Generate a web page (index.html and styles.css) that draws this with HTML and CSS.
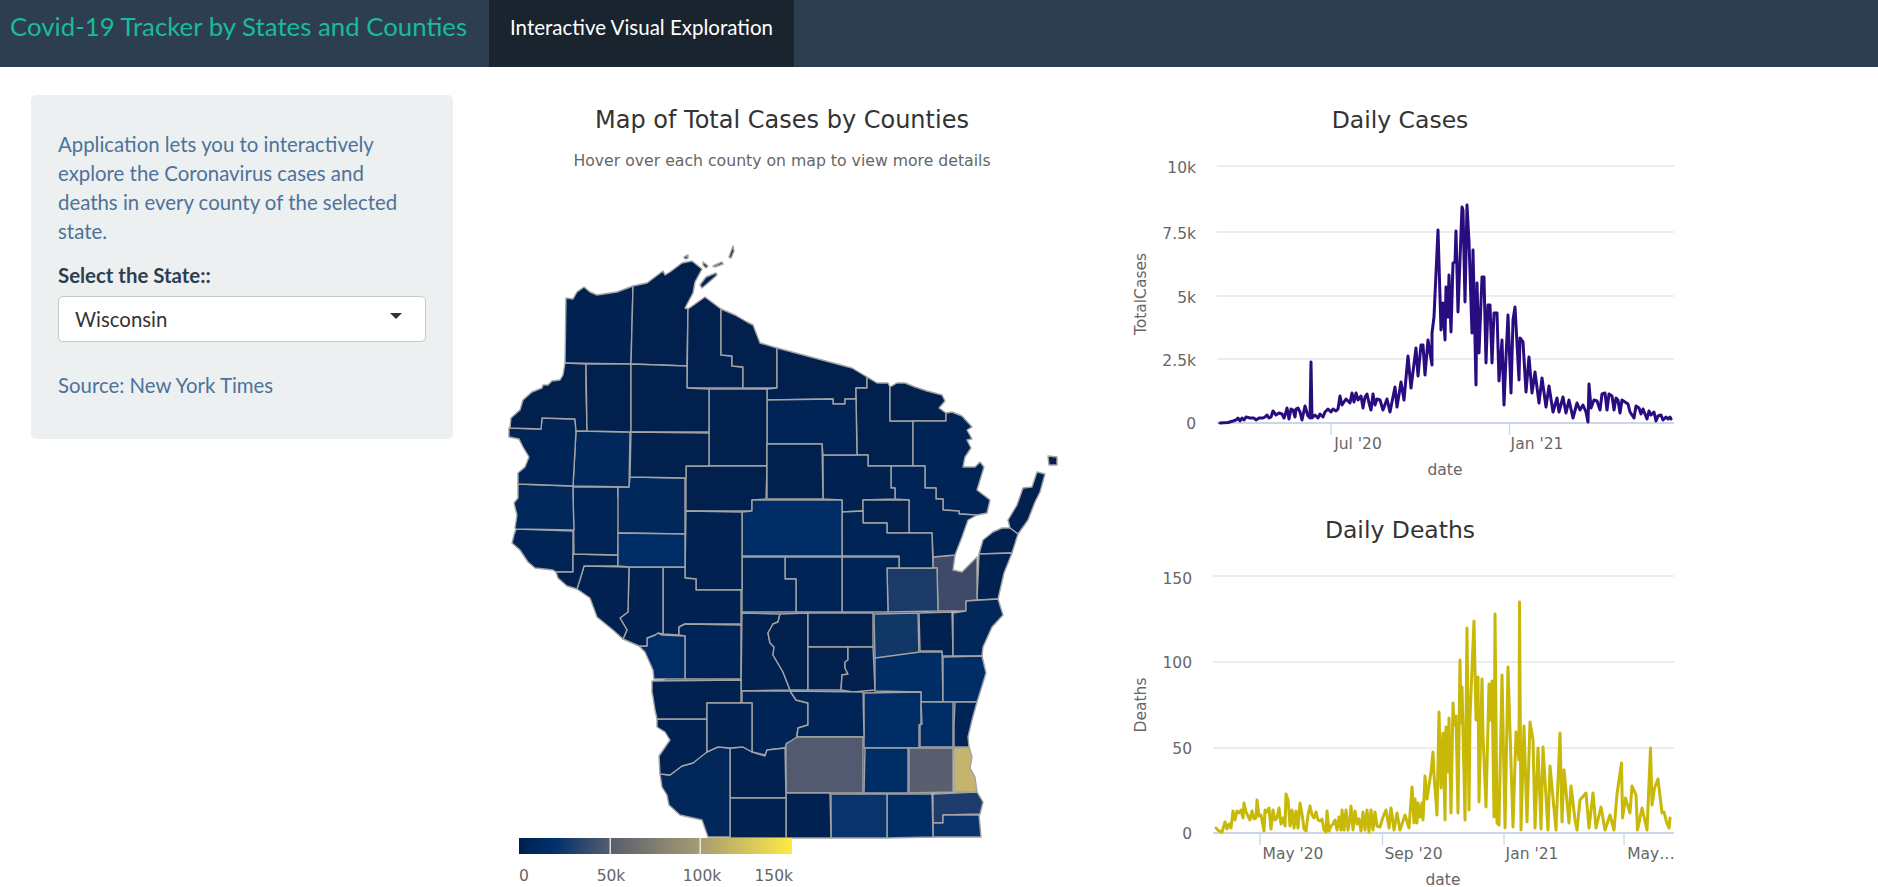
FILE: index.html
```html
<!DOCTYPE html>
<html lang="en">
<head>
  <meta charset="UTF-8" />
  <meta name="viewport" content="width=device-width, initial-scale=1.0"/>
  <title>Covid-19 Tracker by States and Counties</title>
  <link rel="stylesheet" href="styles.css">
</head>
<body>
  <nav class="navbar">
    <a class="brand">Covid-19 Tracker by States and Counties</a>
    <a class="tab">Interactive Visual Exploration</a>
  </nav>

  <div class="page">
    <aside class="well">
      <p class="intro">Application lets you to interactively explore the Coronavirus cases and deaths in every county of the selected state.</p>
      <label class="select-label">Select the State::</label>
      <div class="select"><span>Wisconsin</span><i class="caret"></i></div>
      <p class="source">Source: New York Times</p>
    </aside>

    <section class="map-col">
      <h2 class="map-title">Map of Total Cases by Counties</h2>
      <p class="map-sub">Hover over each county on map to view more details</p>
      <!-- viewBox uses page coordinates -->
      <svg class="map" viewBox="472 240 620 647" width="620" height="647">
        <defs>
          <linearGradient id="scale">
            <stop offset="0" stop-color="#00204e"/>
            <stop offset="0.13" stop-color="#00306f"/>
            <stop offset="0.33" stop-color="#575c6e"/>
            <stop offset="0.66" stop-color="#a59c74"/>
            <stop offset="1" stop-color="#ffe945"/>
          </linearGradient>
        </defs>
        <g class="counties">
          <polygon class="underlay" points="575,370 860,400 900,470 930,520 950,600 960,700 950,780 880,830 740,830 700,790 670,720 665,680 630,625 585,570 530,510 530,440"/>
          <polygon class="c1" points="566,298 573,299 577,292 584,287 590,292 597,295 617,292 633,286 631,364 565,363"/>
          <polygon class="c0" points="633,286 647,283 655,277 663,271 665,275 670,272 682,263 692,261 702,269 695,282 693,293 685,308 688,309 687,366 631,364"/>
          <polygon class="c0" points="688,309 705,297 721,309 721,355 732,356 732,366 743,367 743,388 687,388"/>
          <polygon class="c0" points="721,309 735,315 747,322 753,325 760,343 777,348 777,388 743,388 743,367 732,366 732,356 721,355"/>
          <polygon class="c0" points="777,348 852,368 867,377 867,388 856,388 856,399 845,399 845,404 833,404 833,399 767,400 767,389 777,388"/>
          <polygon class="c0" points="867,377 877,383 888,383 890,387 890,421 913,421 913,466 868,466 868,455 857,455 856,388 867,388"/>
          <polygon class="c0" points="890,387 897,383 905,383 915,387 927,391 942,395 945,401 939,408 946,413 946,421 890,421"/>
          <polygon class="c2" points="946,413 952,412 962,416 972,427 967,430 972,439 967,440 971,448 965,457 963,467 975,467 980,462 984,467 977,490 990,500 987,513 977,515 959,514 959,511 943,510 943,499 936,499 936,488 925,488 925,466 913,466 913,421 946,421"/>
          <polygon class="c1" points="1037,472 1045,474 1040,492 1035,502 1028,520 1018,534 1010,528 1008,520 1017,505 1023,488 1032,487"/>
          <polygon class="c1" points="1048,456 1057,457 1057,465 1049,465"/>
          <polygon class="c1" points="729,257 733,246 734,251 731,258"/>
          <polygon class="c1" points="703,262 708,266 706,268 703,265"/>
          <polygon class="c1" points="713,266 722,262 723,264 715,267"/>
          <polygon class="c1" points="700,285 706,277 716,273 717,275 708,283 702,288"/>
          <polygon class="c1" points="684,257 688,255 688,258 685,259"/>
          <polygon class="c1" points="1010,528 1018,534 1012,553 979,554 983,540 993,532 1002,528"/>
          <polygon class="c1" points="979,554 1012,553 1004,573 998,599 977,600"/>
          <polygon class="brown" points="933,557 955,555 953,570 962,572 977,557 977,600 966,601 966,611 938,611 937,568 933,568"/>
          <polygon class="outagamie" points="887,568 937,568 938,611 888,612"/>
          <polygon class="c2" points="891,466 925,466 925,488 936,488 936,499 943,499 943,510 959,511 959,514 977,515 968,520 962,537 955,555 933,557 932,533 909,533 909,500 895,499 895,488 891,488"/>
          <polygon class="c1" points="823,455 868,455 868,466 891,466 891,488 895,488 895,499 863,500 863,511 842,512 842,500 823,499"/>
          <polygon class="c0" points="863,500 909,500 909,533 887,533 887,523 863,523"/>
          <polygon class="c2" points="842,512 863,511 863,523 887,523 887,533 932,533 933,568 899,568 899,556 842,556"/>
          <polygon class="c2" points="767,400 833,399 833,404 845,404 845,399 856,399 857,455 823,455 822,444 767,444"/>
          <polygon class="c0" points="709,389 767,389 767,466 709,466"/>
          <polygon class="c0" points="686,466 767,466 766,499 752,500 752,511 686,511"/>
          <polygon class="c0" points="767,444 822,444 823,499 767,499"/>
          <polygon class="c4" points="752,500 842,500 842,556 742,556 742,512 752,511"/>
          <polygon class="c2" points="842,557 899,557 899,568 887,568 888,612 842,612"/>
          <polygon class="c2" points="785,557 842,557 842,612 796,612 796,579 785,579"/>
          <polygon class="c2" points="742,557 785,557 785,579 796,579 796,612 742,612"/>
          <polygon class="c1" points="686,511 742,512 742,590 696,590 696,579 685,578"/>
          <polygon class="c1" points="663,567 685,567 685,578 696,579 696,590 741,590 741,624 685,624 679,627 679,635 663,634"/>
          <polygon class="c2" points="679,635 679,627 685,624 741,625 741,679 685,679 685,636"/>
          <polygon class="c4" points="647,638 655,635 658,633 662,635 685,636 685,679 654,679 653,670 645,652 639,646 647,646"/>
          <polygon class="c1" points="629,567 663,567 663,634 658,633 655,635 647,638 647,646 639,646 623,639 627,630 620,618 628,612"/>
          <polygon class="c1" points="584,566 629,567 628,612 620,618 627,630 623,639 613,630 597,617 590,598 577,589 582,573"/>
          <polygon class="c2" points="516,529 573,531 573,572 556,572 553,570 535,568 528,562 520,550 512,543 514,535"/>
          <polygon class="c0" points="573,554 618,555 618,566 584,566 582,573 577,589 567,586 558,578 556,572 573,572"/>
          <polygon class="c2" points="573,487 618,487 618,498 619,498 618,555 574,554"/>
          <polygon class="c3" points="518,484 573,486 573,497 574,530 516,529 515,528 517,515 514,503 518,498"/>
          <polygon class="c3" points="630,477 685,478 685,534 618,533 618,487 629,487"/>
          <polygon class="c4" points="618,533 685,534 685,567 629,567 618,566"/>
          <polygon class="c3" points="576,431 630,432 629,487 573,486"/>
          <polygon class="c2" points="542,418 575,419 576,431 573,486 518,484 518,473 525,467 529,457 523,447 519,439 509,437 509,428 541,429"/>
          <polygon class="c0" points="510,428 511,418 520,410 523,400 532,392 542,388 543,385 548,385 552,381 560,380 563,375 565,363 586,364 586,387 587,431 576,431 575,419 542,418 541,429"/>
          <polygon class="c0" points="586,364 631,364 631,432 587,431"/>
          <polygon class="c0" points="631,364 687,366 687,388 709,389 709,432 631,432"/>
          <polygon class="c0" points="631,432 709,433 709,466 686,466 686,478 630,477"/>
          <polygon class="c1" points="742,613 780,614 778,622 773,624 768,633 770,643 774,647 773,655 783,672 790,690 741,691"/>
          <polygon class="c0" points="780,614 808,613 808,690 790,690 783,672 773,655 774,647 770,643 768,633 773,624 778,622"/>
          <polygon class="c0" points="808,613 873,613 873,647 808,647"/>
          <polygon class="c0" points="808,647 848,647 848,660 845,662 845,668 848,674 842,675 841,690 808,690"/>
          <polygon class="c0" points="848,647 873,647 875,690 853,692 841,690 842,675 848,674 845,668 845,662 848,660"/>
          <polygon class="winnebago" points="874,614 918,613 919,657 875,658"/>
          <polygon class="c1" points="919,613 952,612 953,656 942,656 942,651 920,651"/>
          <polygon class="c3" points="953,613 966,611 966,601 998,599 1003,615 992,627 983,647 982,656 953,656"/>
          <polygon class="c4" points="875,658 920,652 942,652 943,702 921,702 921,692 875,691"/>
          <polygon class="c4" points="943,657 982,656 986,673 977,702 943,702"/>
          <polygon class="c4" points="864,693 921,692 921,724 919,725 919,748 864,748"/>
          <polygon class="c2" points="742,691 790,691 796,700 808,703 808,725 798,728 796,740 787,743 785,748 767,750 765,755 752,752 752,703 742,703"/>
          <polygon class="c2" points="790,691 863,692 864,737 797,737 798,728 808,725 808,703 796,700"/>
          <polygon class="dane" points="786,744 797,737 863,737 863,793 786,793"/>
          <polygon class="c4" points="865,748 908,748 908,793 864,793"/>
          <polygon class="waukesha" points="909,748 953,748 953,792 909,793"/>
          <polygon class="milwaukee" points="954,748 969,747 972,757 970,768 975,777 977,792 954,792"/>
          <polygon class="c4" points="921,702 953,702 953,747 920,747 920,725 922,724"/>
          <polygon class="c2" points="955,702 977,702 972,720 968,737 969,747 954,747 954,725"/>
          <polygon class="racine" points="933,794 977,792 983,802 980,814 943,815 943,823 933,823"/>
          <polygon class="c5" points="943,815 979,815 981,837 933,837 933,823 943,823"/>
          <polygon class="c4" points="887,794 932,794 933,837 887,838"/>
          <polygon class="c5" points="831,794 887,794 887,838 831,838"/>
          <polygon class="c1" points="786,793 830,793 831,838 786,838"/>
          <polygon class="c1" points="730,748 743,747 752,752 765,756 767,750 785,748 786,798 730,798"/>
          <polygon class="c1" points="730,798 786,798 786,838 730,838"/>
          <polygon class="c3" points="660,774 670,775 682,766 693,763 705,752 718,747 730,748 730,837 708,837 702,820 680,815 669,805 667,795 662,787"/>
          <polygon class="c1" points="657,719 707,719 707,752 693,763 682,766 670,775 660,774 659,756 670,740 665,732 657,727"/>
          <polygon class="c1" points="652,681 741,680 741,703 707,703 707,719 657,719 655,710 653,697 652,692"/>
          <polygon class="c1" points="707,703 752,703 752,752 743,747 730,748 718,747 707,752"/>
        </g>
        <rect class="legend-bar" x="519" y="838" width="273" height="16" fill="url(#scale)"/>
        <rect class="legend-tick" x="609.5" y="838" width="1.5" height="16"/>
        <rect class="legend-tick" x="699.5" y="838" width="1.5" height="16"/>
        <text class="legend-label" x="519" y="876" text-anchor="start" dominant-baseline="middle">0</text>
        <text class="legend-label" x="611" y="876" text-anchor="middle" dominant-baseline="middle">50k</text>
        <text class="legend-label" x="702" y="876" text-anchor="middle" dominant-baseline="middle">100k</text>
        <text class="legend-label" x="793" y="876" text-anchor="end" dominant-baseline="middle">150k</text>
      </svg>
    </section>

    <section class="chart-col">
      <svg class="chart" viewBox="1111 95 579 400" width="579" height="400">
        <text class="chart-title" x="1400" y="121" text-anchor="middle" dominant-baseline="middle">Daily Cases</text>
        <path class="grid" d="M1217 166H1674M1217 232H1674M1217 296H1674M1217 359H1674"/>
        <path class="axis" d="M1217 423H1674"/>
        <path class="tick" d="M1331 423V435M1509.5 423V435"/>
        <text class="label" x="1196" y="168" text-anchor="end" dominant-baseline="middle">10k</text>
        <text class="label" x="1196" y="234" text-anchor="end" dominant-baseline="middle">7.5k</text>
        <text class="label" x="1196" y="298" text-anchor="end" dominant-baseline="middle">5k</text>
        <text class="label" x="1196" y="361" text-anchor="end" dominant-baseline="middle">2.5k</text>
        <text class="label" x="1196" y="424" text-anchor="end" dominant-baseline="middle">0</text>
        <text class="label" x="1358" y="444" text-anchor="middle" dominant-baseline="middle">Jul '20</text>
        <text class="label" x="1537" y="444" text-anchor="middle" dominant-baseline="middle">Jan '21</text>
        <text class="label" x="1445" y="470" text-anchor="middle" dominant-baseline="middle">date</text>
        <text class="label" x="1141" y="294" text-anchor="middle" dominant-baseline="middle" transform="rotate(-90 1141 294)">TotalCases</text>
        <polyline class="line cases" points="1220,423 1228,422.5 1233,421 1236,420 1238,418 1240,421 1242,418 1244,420 1246,417 1250,418 1254,418 1256,420 1259,418 1263,418 1265,417 1267,415 1269,418 1271,417 1273,411 1276,415 1279,413 1282,414 1284,418 1286,412 1287,408 1289,419 1291,409 1293,410 1295,417 1296,409 1298,408 1300,412 1302,420 1305,406 1308,416 1310,418 1311,362 1312,418 1315,415 1318,418 1320,414 1323,417 1325,412 1328,409 1331,412 1333,409 1336,411 1338,409 1340,396 1342,405 1344,402 1346,399 1348,401 1350,403 1352,393 1354,402 1356,393 1358,400 1361,396 1363,408 1365,397 1367,394 1369,403 1371,410 1373,394 1375,405 1377,399 1380,400 1383,410 1387,399 1390,412 1395,387 1397,407 1401,382 1404,400 1408,356 1411,388 1416,348 1418,376 1421,345 1423,345 1425,375 1428,340 1432,365 1432,333 1434,317 1438,230 1441,330 1443,303 1445,340 1446,287 1448,317 1449,275 1451,332 1453,263 1455,262 1456,231 1458,312 1462,207 1463,210 1465,302 1467,205 1469,242 1472,333 1473,250 1476,385 1477,283 1479,353 1482,277 1484,277 1486,363 1488,305 1490,305 1492,363 1494,313 1497,313 1499,381 1502,340 1504,405 1506,357 1508,315 1511,393 1513,320 1515,307 1519,380 1520,338 1523,342 1526,392 1529,357 1532,393 1535,372 1539,403 1542,378 1546,407 1549,386 1553,412 1557,398 1559,412 1563,397 1566,413 1569,400 1573,418 1577,403 1580,410 1583,405 1586,412 1588,422 1589,384 1591,408 1594,400 1597,401 1600,410 1602,394 1605,393 1607,410 1609,394 1612,396 1614,410 1616,398 1618,400 1620,413 1622,400 1625,402 1628,404 1630,412 1632,415 1634,418 1636,406 1639,408 1641,414 1643,409 1645,414 1647,419 1649,411 1651,415 1654,412 1656,421 1658,416 1661,415 1663,420 1666,417 1668,419 1670,417 1671,419"/>
      </svg>
      <svg class="chart" viewBox="1111 495 579 392" width="579" height="392">
        <text class="chart-title" x="1400" y="531" text-anchor="middle" dominant-baseline="middle">Daily Deaths</text>
        <path class="grid" d="M1213 576H1674M1213 662H1674M1213 748H1674"/>
        <path class="axis" d="M1213 833H1674"/>
        <path class="tick" d="M1260 833V845M1382.5 833V845M1504 833V845M1624 833V845"/>
        <text class="label" x="1192" y="579" text-anchor="end" dominant-baseline="middle">150</text>
        <text class="label" x="1192" y="663" text-anchor="end" dominant-baseline="middle">100</text>
        <text class="label" x="1192" y="749" text-anchor="end" dominant-baseline="middle">50</text>
        <text class="label" x="1192" y="834" text-anchor="end" dominant-baseline="middle">0</text>
        <text class="label" x="1293" y="854" text-anchor="middle" dominant-baseline="middle">May '20</text>
        <text class="label" x="1413.5" y="854" text-anchor="middle" dominant-baseline="middle">Sep '20</text>
        <text class="label" x="1532" y="854" text-anchor="middle" dominant-baseline="middle">Jan '21</text>
        <text class="label" x="1651" y="854" text-anchor="middle" dominant-baseline="middle">May…</text>
        <text class="label" x="1443" y="880" text-anchor="middle" dominant-baseline="middle">date</text>
        <text class="label" x="1141" y="705" text-anchor="middle" dominant-baseline="middle" transform="rotate(-90 1141 705)">Deaths</text>
        <polyline class="line deaths" points="1216,828 1219,831 1222,832 1225,822 1227,829 1229,824 1231,828 1233,811 1235,820 1237,811 1239,813 1241,810 1243,818 1244,803 1246,812 1248,816 1250,820 1252,811 1254,819 1256,818 1257,800 1259,816 1261,815 1264,831 1265,810 1267,812 1269,808 1271,829 1273,810 1275,820 1277,818 1279,808 1281,824 1283,818 1285,826 1286,794 1288,800 1290,826 1292,810 1294,828 1296,811 1298,828 1300,803 1302,814 1304,829 1306,831 1308,815 1310,806 1312,815 1314,818 1316,812 1318,820 1320,821 1322,819 1324,830 1326,832 1327,811 1329,831 1331,826 1333,824 1335,820 1337,830 1338,824 1339,817 1341,830 1342,810 1344,830 1346,810 1348,830 1350,818 1351,806 1353,830 1355,811 1357,824 1359,819 1361,831 1363,812 1365,830 1367,810 1369,832 1371,810 1373,830 1375,812 1377,826 1380,827 1383,817 1386,810 1389,828 1391,808 1394,830 1397,813 1400,830 1405,815 1409,828 1412,787 1414,823 1415,799 1417,823 1418,803 1420,817 1422,803 1423,820 1425,776 1427,799 1431,772 1433,752 1434,775 1437,815 1439,712 1441,788 1443,733 1445,820 1446,727 1448,772 1449,718 1451,813 1453,703 1454,725 1456,716 1458,813 1460,660 1461,723 1462,687 1465,820 1467,628 1469,810 1470,717 1474,621 1476,720 1478,677 1479,802 1482,679 1483,735 1486,807 1489,684 1490,720 1492,681 1494,817 1495,614 1497,823 1499,825 1502,675 1505,828 1508,667 1513,827 1516,732 1519,760 1519.5,602 1521,830 1524,726 1527,822 1530,722 1533,740 1535,828 1538,748 1541,829 1543,747 1548,830 1550,766 1556,830 1560,733 1562,822 1564,770 1569,823 1571,786 1575,820 1577,830 1580,800 1586,793 1589,828 1593,793 1596,828 1601,807 1605,830 1610,815 1614,830 1617,794 1621.5,763 1622.5,818 1625.5,798 1630,813 1632,786 1636,795 1637.5,830 1642,808 1647,830 1650.5,748 1652,805 1654.5,788 1658,779 1662,813 1664,812 1666.5,822 1669,828 1670,818"/>
      </svg>
    </section>
  </div>
</body>
</html>
```

FILE: styles.css
```css
body {
  margin: 0;
  font-family: 'Lato', 'Liberation Sans', sans-serif;
  background-color: #fff;
  color: #2c3e50;
}

.navbar {
  display: flex;
  align-items: stretch;
  height: 67px;
  background-color: #2c3e50;
}
.brand {
  width: 489px;
  padding-left: 10px;
  color: #18bc9c;
  font-size: 25.8px;
  line-height: 52px;
  box-sizing: border-box;
}
.tab {
  padding: 0 21px;
  background-color: #1a242f;
  color: #fff;
  font-size: 20.5px;
  line-height: 54px;
}

.page {
  display: grid;
  grid-template-columns: 422px 620px 579px;
  column-gap: 19px;
  align-items: start;
  padding: 28px 0 0 31px;
}

.well {
  height: 344px;
  box-sizing: border-box;
  padding: 35px 27px 0;
  background-color: #ecf0f1;
  border-radius: 5px;
  font-size: 20.4px;
  line-height: 29px;
}
.intro {
  margin: 0;
  color: #4e7299;
}
.select-label {
  display: block;
  margin-top: 14.5px;
  font-weight: 700;
  color: #2c3e50;
}
.select {
  display: flex;
  align-items: center;
  justify-content: space-between;
  height: 46px;
  margin-top: 6.5px;
  padding: 0 23px 0 16px;
  box-sizing: border-box;
  background-color: #fff;
  border: 1px solid #c8c8c8;
  border-radius: 5px;
  color: #333;
}
.caret {
  width: 0;
  height: 0;
  margin-top: -6px;
  border-top: 6px solid #333;
  border-left: 6px solid transparent;
  border-right: 6px solid transparent;
}
.source {
  margin: 28.5px 0 0;
  color: #4e7299;
}

.map-col {
  text-align: center;
}
.map-title {
  margin: 0;
  font-family: 'DejaVu Sans', sans-serif;
  font-size: 24px;
  font-weight: 400;
  line-height: 50px;
  color: #333;
}
.map-sub {
  margin: 0;
  font-family: 'DejaVu Sans', sans-serif;
  font-size: 15.7px;
  line-height: 32px;
  color: #666;
}
.map {
  display: block;
  margin-top: 63px;
}
.counties polygon {
  stroke: #a3a3a3;
  stroke-width: 1.4;
  stroke-linejoin: round;
}
.counties .underlay {
  fill: #01214f;
  stroke: none;
}
.c0 { fill: #01204e; }
.c1 { fill: #012251; }
.c2 { fill: #012456; }
.c3 { fill: #01275b; }
.c4 { fill: #012d66; }
.c5 { fill: #09336b; }
.winnebago { fill: #113766; }
.outagamie { fill: #1b3a68; }
.racine { fill: #1d3c6c; }
.brown { fill: #3e4a68; }
.dane { fill: #525a70; }
.waukesha { fill: #5a5f70; }
.milwaukee { fill: #c4b46c; }

.legend-tick { fill: #fff; opacity: 0.8; }
.legend-label {
  font-family: 'DejaVu Sans', sans-serif;
  font-size: 15.5px;
  fill: #666;
}

.chart {
  display: block;
}
.chart-title {
  font-family: 'DejaVu Sans', sans-serif;
  font-size: 23.5px;
  fill: #333;
}
.label {
  font-family: 'DejaVu Sans', sans-serif;
  font-size: 15.5px;
  fill: #666;
}
.grid {
  fill: none;
  stroke: #e6e6e6;
  stroke-width: 1.3;
}
.axis {
  fill: none;
  stroke: #ccd6eb;
  stroke-width: 2;
}
.tick {
  fill: none;
  stroke: #ccd6eb;
  stroke-width: 1.3;
}
.line {
  fill: none;
  stroke-width: 3;
  stroke-linejoin: round;
  stroke-linecap: round;
}
.cases { stroke: #290c80; }
.deaths { stroke: #c8b808; }
```
